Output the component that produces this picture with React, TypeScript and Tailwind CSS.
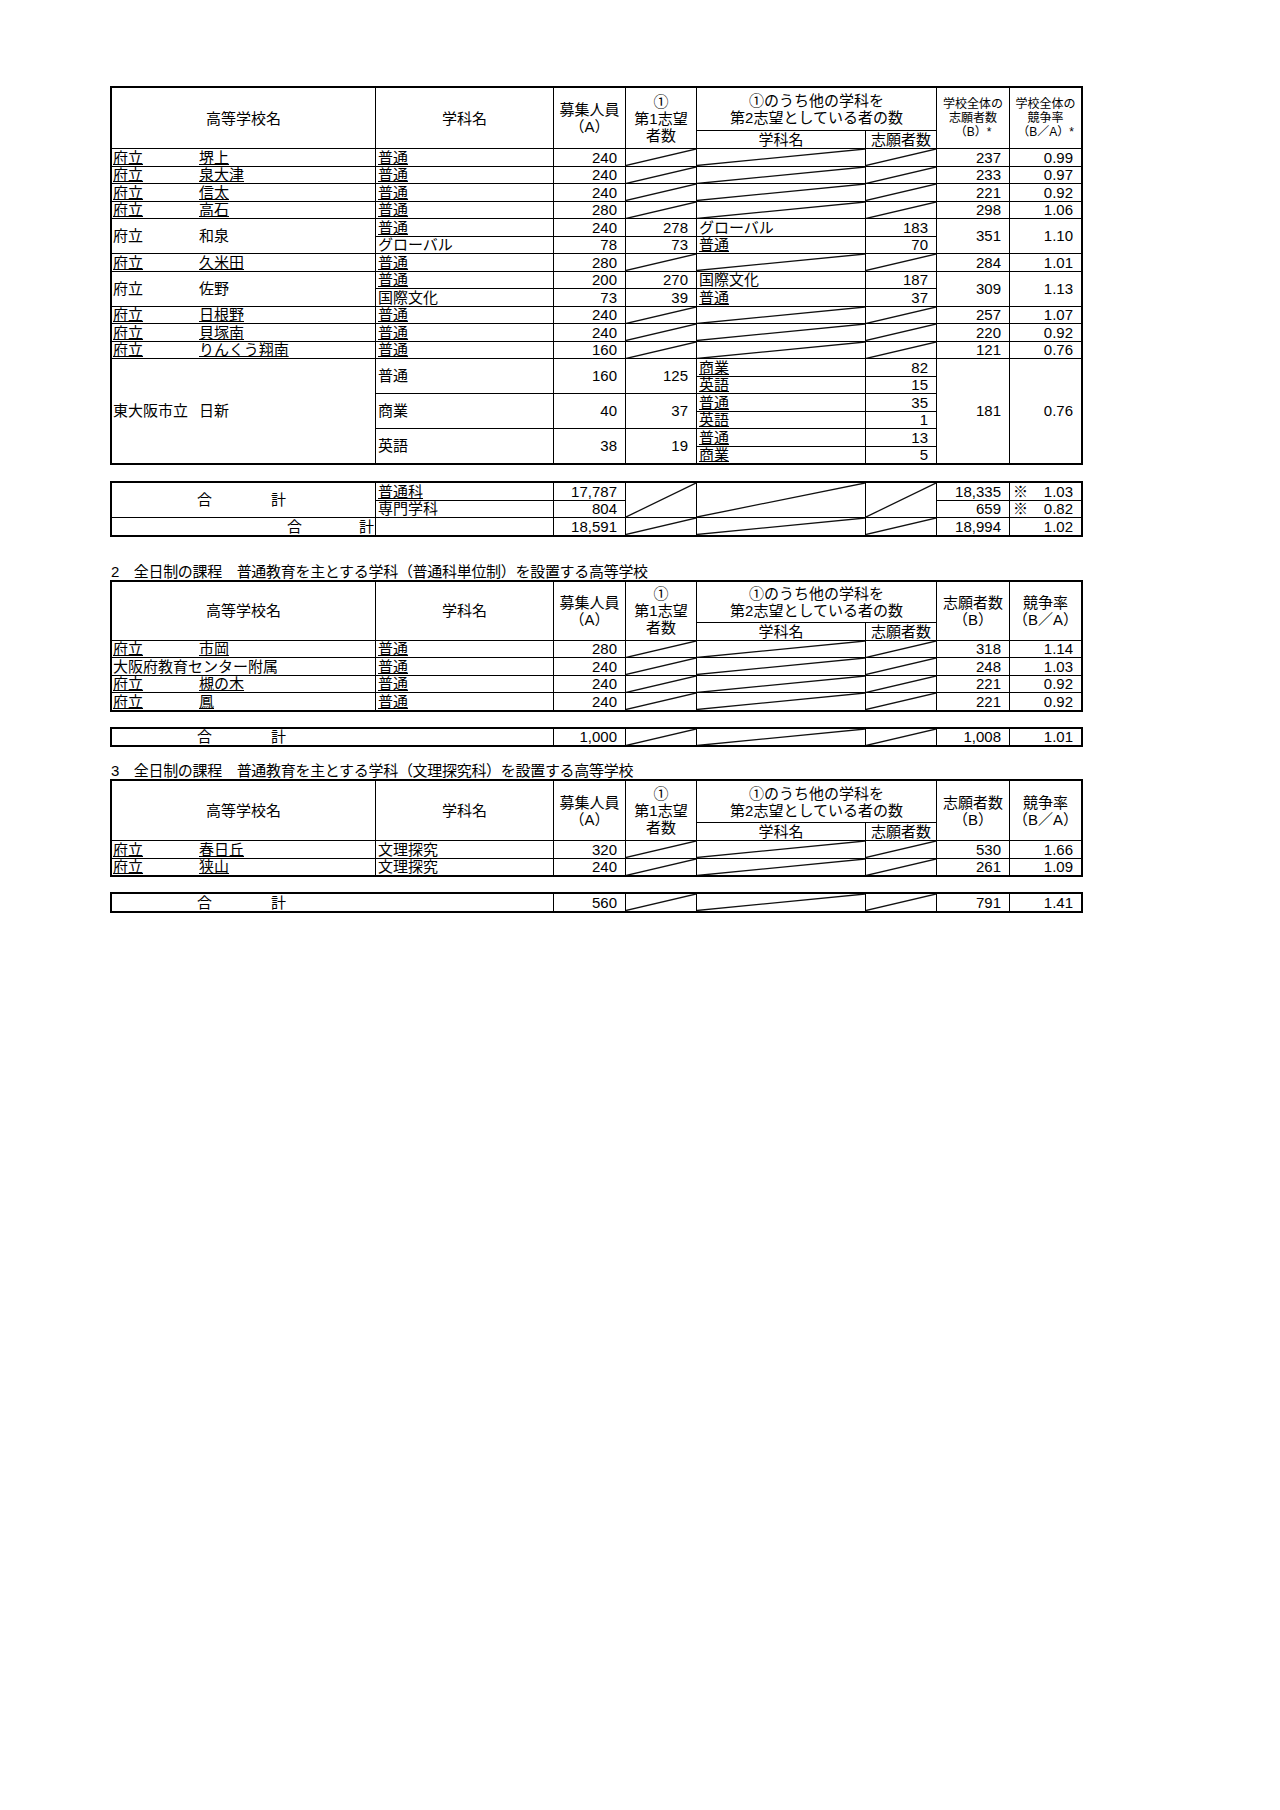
import React from "react";

const UL = "underline decoration-1 underline-offset-[1px]";
const COLS = "grid-cols-[263px_177px_71px_70px_168px_70px_72px_71px]";

type P = { children?: React.ReactNode; u?: boolean; span?: string; center?: boolean };

function Txt({ children, u = false, span = "", center = false }: P) {
  return (
    <div className={`flex bg-white pl-[2px] leading-[16px] whitespace-nowrap ${center ? "items-center" : "items-end"} ${span}`}>
      <span className={u ? UL : ""}>{children}</span>
    </div>
  );
}

function Num({ children, span = "", center = false }: P) {
  return (
    <div className={`flex justify-end bg-white pr-[8px] leading-[16px] whitespace-nowrap ${center ? "items-center" : "items-end"} ${span}`}>
      <span>{children}</span>
    </div>
  );
}

function Diag({ span = "" }: { span?: string }) {
  return (
    <div className={`relative bg-white ${span}`}>
      <svg className="absolute inset-0 h-full w-full" viewBox="0 0 100 100" preserveAspectRatio="none">
        <line x1="0" y1="100" x2="100" y2="0" stroke="#111" strokeWidth="1.3" vectorEffect="non-scaling-stroke" />
      </svg>
    </div>
  );
}

function D3() {
  return (
    <>
      <Diag />
      <Diag />
      <Diag />
    </>
  );
}

function School({ pre = "府立", name, u = false, span = "", center = false }: { pre?: string; name: string; u?: boolean; span?: string; center?: boolean }) {
  return (
    <div className={`flex bg-white leading-[16px] whitespace-nowrap ${center ? "items-center" : "items-end"} ${span}`}>
      <span className="w-[87px] shrink-0 pl-[1px]">
        <span className={u ? UL : ""}>{pre}</span>
      </span>
      <span className={u ? UL : ""}>{name}</span>
    </div>
  );
}

function Head({ children, span = "", small = false }: P & { small?: boolean }) {
  return (
    <div className={`flex flex-col items-center justify-center bg-white text-center whitespace-nowrap ${small ? "text-[12px] leading-[14px]" : "leading-[17px]"} ${span}`}>
      {children}
    </div>
  );
}

function HeaderCells({ full }: { full: boolean }) {
  return (
    <>
      <Head span="row-span-2">高等学校名</Head>
      <Head span="row-span-2">学科名</Head>
      <Head span="row-span-2">
        <span>募集人員</span>
        <span>（A）</span>
      </Head>
      <Head span="row-span-2">
        <span>①</span>
        <span>第1志望</span>
        <span>者数</span>
      </Head>
      <Head span="col-span-2">
        <span>①のうち他の学科を</span>
        <span>第2志望としている者の数</span>
      </Head>
      {full ? (
        <>
          <Head span="row-span-2" small>
            <span>学校全体の</span>
            <span>志願者数</span>
            <span>（B）*</span>
          </Head>
          <Head span="row-span-2" small>
            <span>学校全体の</span>
            <span>競争率</span>
            <span>（B／A）*</span>
          </Head>
        </>
      ) : (
        <>
          <Head span="row-span-2">
            <span>志願者数</span>
            <span>（B）</span>
          </Head>
          <Head span="row-span-2">
            <span>競争率</span>
            <span>（B／A）</span>
          </Head>
        </>
      )}
      <div className="flex items-end justify-center bg-white leading-[16px]">学科名</div>
      <div className="flex items-end justify-center bg-white leading-[16px]">志願者数</div>
    </>
  );
}

function SimpleRow({ pre, name, dept = "普通", du = true, su = true, a, b, r }: { pre?: string; name: string; dept?: string; du?: boolean; su?: boolean; a: string; b: string; r: string }) {
  return (
    <>
      <School pre={pre} name={name} u={su} />
      <Txt u={du}>{dept}</Txt>
      <Num>{a}</Num>
      <D3 />
      <Num>{b}</Num>
      <Num>{r}</Num>
    </>
  );
}

function GouKei({ first = 85, gap = 59 }: { first?: number; gap?: number }) {
  return (
    <>
      <span className={first === 85 ? "pl-[85px]" : "pl-[175px]"}>合</span>
      <span className={gap === 59 ? "ml-[59px]" : "ml-[57px]"}>計</span>
    </>
  );
}

function Title({ children }: P) {
  return <div className="mt-[27px] h-[16px] whitespace-nowrap pl-[1px] text-[15px] leading-[16px] tracking-[-0.3px]">{children}</div>;
}

export default function App() {
  return (
    <div className="min-h-[1810px] w-[1280px] bg-white pt-[86px] pl-[110px] font-['Liberation_Sans','Noto_Sans_CJK_JP',sans-serif] text-[15px] text-black">
      {/* Section 1 */}
      <div className={`grid w-[973px] ${COLS} grid-rows-[42px_17px_repeat(18,16.5px)] gap-px border-2 border-black bg-black`}>
        <HeaderCells full />
        <SimpleRow name="堺上" a="240" b="237" r="0.99" />
        <SimpleRow name="泉大津" a="240" b="233" r="0.97" />
        <SimpleRow name="信太" a="240" b="221" r="0.92" />
        <SimpleRow name="高石" a="280" b="298" r="1.06" />
        {/* 和泉 */}
        <School name="和泉" span="row-span-2" center />
        <Txt u>普通</Txt>
        <Num>240</Num>
        <Num>278</Num>
        <Txt>グローバル</Txt>
        <Num>183</Num>
        <Num span="row-span-2" center>351</Num>
        <Num span="row-span-2" center>1.10</Num>
        <Txt>グローバル</Txt>
        <Num>78</Num>
        <Num>73</Num>
        <Txt u>普通</Txt>
        <Num>70</Num>
        <SimpleRow name="久米田" a="280" b="284" r="1.01" />
        {/* 佐野 */}
        <School name="佐野" span="row-span-2" center />
        <Txt u>普通</Txt>
        <Num>200</Num>
        <Num>270</Num>
        <Txt>国際文化</Txt>
        <Num>187</Num>
        <Num span="row-span-2" center>309</Num>
        <Num span="row-span-2" center>1.13</Num>
        <Txt>国際文化</Txt>
        <Num>73</Num>
        <Num>39</Num>
        <Txt u>普通</Txt>
        <Num>37</Num>
        <SimpleRow name="日根野" a="240" b="257" r="1.07" />
        <SimpleRow name="貝塚南" a="240" b="220" r="0.92" />
        <SimpleRow name="りんくう翔南" a="160" b="121" r="0.76" />
        {/* 日新 */}
        <School pre="東大阪市立" name="日新" span="row-span-6" center />
        <Txt span="row-span-2" center>普通</Txt>
        <Num span="row-span-2" center>160</Num>
        <Num span="row-span-2" center>125</Num>
        <Txt u>商業</Txt>
        <Num>82</Num>
        <Num span="row-span-6" center>181</Num>
        <Num span="row-span-6" center>0.76</Num>
        <Txt u>英語</Txt>
        <Num>15</Num>
        <Txt span="row-span-2" center>商業</Txt>
        <Num span="row-span-2" center>40</Num>
        <Num span="row-span-2" center>37</Num>
        <Txt u>普通</Txt>
        <Num>35</Num>
        <Txt u>英語</Txt>
        <Num>1</Num>
        <Txt span="row-span-2" center>英語</Txt>
        <Num span="row-span-2" center>38</Num>
        <Num span="row-span-2" center>19</Num>
        <Txt u>普通</Txt>
        <Num>13</Num>
        <Txt u>商業</Txt>
        <Num>5</Num>
      </div>

      {/* Section 1 totals */}
      <div className={`mt-[16px] grid w-[973px] ${COLS} grid-rows-[repeat(3,16.5px)] gap-px border-2 border-black bg-black`}>
        <div className="row-span-2 flex items-center bg-white leading-[16px]">
          <GouKei />
        </div>
        <Txt u>普通科</Txt>
        <Num>17,787</Num>
        <Diag span="row-span-2" />
        <Diag span="row-span-2" />
        <Diag span="row-span-2" />
        <Num>18,335</Num>
        <div className="flex items-end justify-between bg-white pr-[8px] pl-[3px] leading-[16px]">
          <span>※</span>
          <span>1.03</span>
        </div>
        <Txt>専門学科</Txt>
        <Num>804</Num>
        <Num>659</Num>
        <div className="flex items-end justify-between bg-white pr-[8px] pl-[3px] leading-[16px]">
          <span>※</span>
          <span>0.82</span>
        </div>
        <div className="flex items-end bg-white leading-[16px]">
          <GouKei first={175} gap={57} />
        </div>
        <div className="bg-white" />
        <Num>18,591</Num>
        <D3 />
        <Num>18,994</Num>
        <Num>1.02</Num>
      </div>

      {/* Section 2 */}
      <Title>2　全日制の課程　普通教育を主とする学科（普通科単位制）を設置する高等学校</Title>
      <div className={`grid w-[973px] ${COLS} grid-rows-[40px_17px_repeat(4,16.5px)] gap-px border-2 border-black bg-black`}>
        <HeaderCells full={false} />
        <SimpleRow name="市岡" a="280" b="318" r="1.14" />
        <div className="flex items-end bg-white pl-[1px] leading-[16px] whitespace-nowrap">大阪府教育センター附属</div>
        <Txt u>普通</Txt>
        <Num>240</Num>
        <D3 />
        <Num>248</Num>
        <Num>1.03</Num>
        <SimpleRow name="槻の木" a="240" b="221" r="0.92" />
        <SimpleRow name="鳳" a="240" b="221" r="0.92" />
      </div>
      <div className={`mt-[15px] grid w-[973px] ${COLS} grid-rows-[16.5px] gap-px border-2 border-black bg-black`}>
        <div className="col-span-2 flex items-end bg-white leading-[16px]">
          <GouKei />
        </div>
        <Num>1,000</Num>
        <D3 />
        <Num>1,008</Num>
        <Num>1.01</Num>
      </div>

      {/* Section 3 */}
      <div className="mt-[16px] h-[16px] whitespace-nowrap pl-[1px] text-[15px] leading-[16px] tracking-[-0.3px]">
        3　全日制の課程　普通教育を主とする学科（文理探究科）を設置する高等学校
      </div>
      <div className={`grid w-[973px] ${COLS} grid-rows-[41px_17px_repeat(2,16.5px)] gap-px border-2 border-black bg-black`}>
        <HeaderCells full={false} />
        <SimpleRow name="春日丘" dept="文理探究" du={false} a="320" b="530" r="1.66" />
        <SimpleRow name="狭山" dept="文理探究" du={false} a="240" b="261" r="1.09" />
      </div>
      <div className={`mt-[15px] grid w-[973px] ${COLS} grid-rows-[16.5px] gap-px border-2 border-black bg-black`}>
        <div className="col-span-2 flex items-end bg-white leading-[16px]">
          <GouKei />
        </div>
        <Num>560</Num>
        <D3 />
        <Num>791</Num>
        <Num>1.41</Num>
      </div>
    </div>
  );
}
